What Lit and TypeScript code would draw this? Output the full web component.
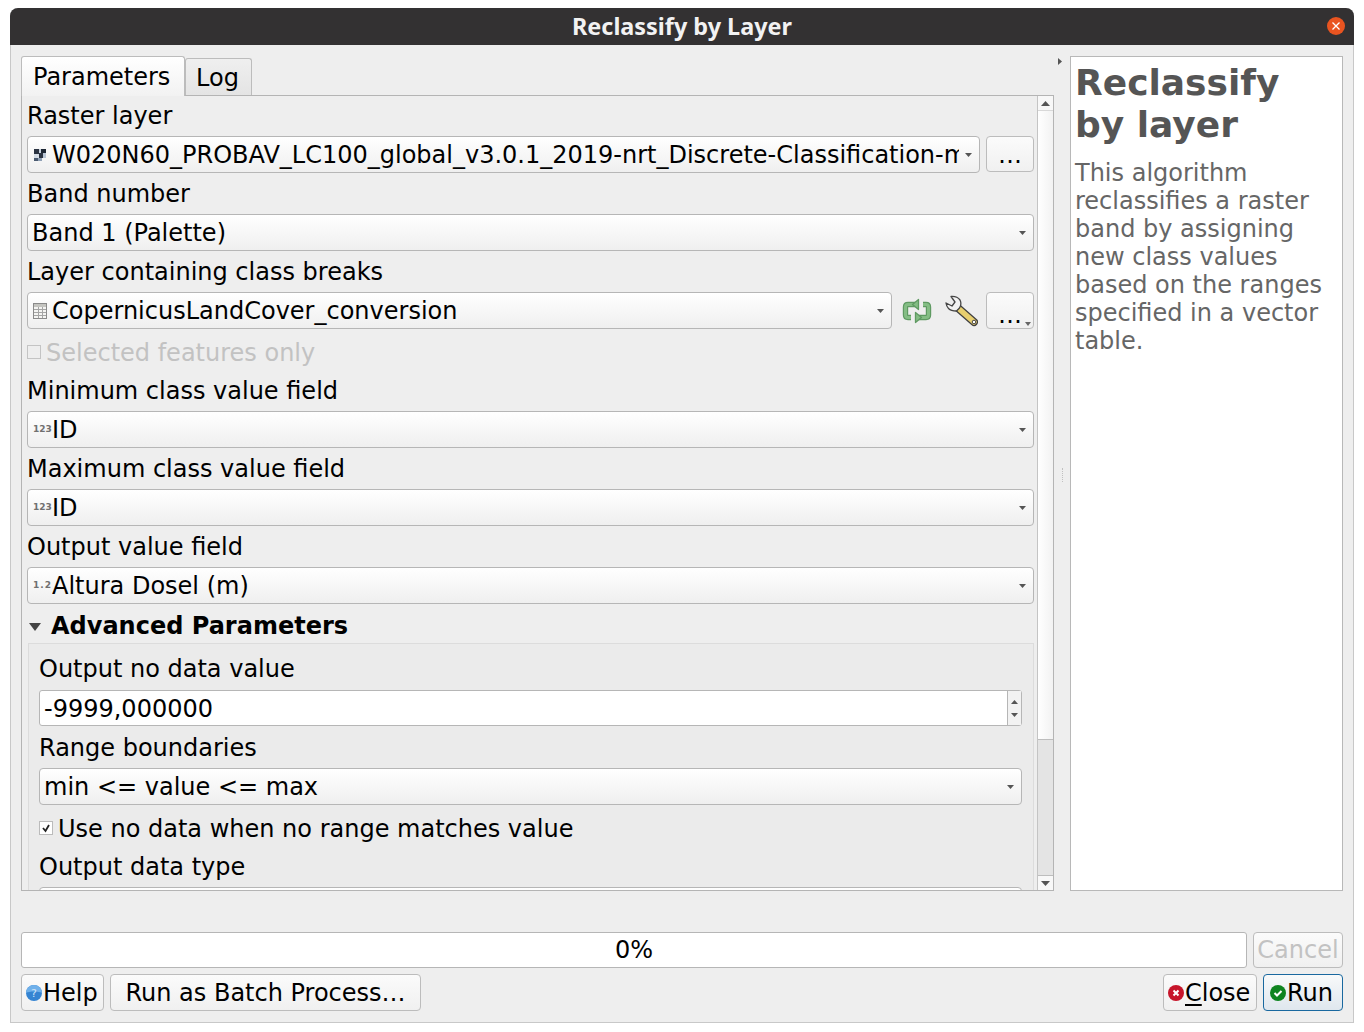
import { LitElement, html, css, svg } from 'lit';
import { customElement } from 'lit/decorators.js';

const arrow = html`<svg class="arrow" width="7" height="4" viewBox="0 0 7 4"><path d="M0 0h7L3.500 4z" fill="#555" /></svg>`;

const rasterIcon = html`<svg class="icon" width="16" height="16" viewBox="0 0 16 16" shape-rendering="crispEdges">
  <rect x="2" y="2" width="5" height="5" fill="#2b3442" />
  <rect x="7" y="2" width="2" height="5" fill="#c9d3df" />
  <rect x="9" y="2" width="5" height="4" fill="#1d2633" />
  <rect x="2" y="7" width="5" height="4" fill="#d5dde6" />
  <rect x="7" y="6" width="4" height="5" fill="#2b3442" />
  <rect x="11" y="6" width="3" height="5" fill="#b9c6d6" />
  <rect x="2" y="11" width="4" height="3" fill="#4a5a70" />
  <rect x="6" y="11" width="4" height="3" fill="#8fa0b5" />
</svg>`;

const tableIcon = html`<svg class="icon" width="16" height="16" viewBox="0 0 16 16" shape-rendering="crispEdges">
  <rect x="1.5" y="0.5" width="13" height="15" fill="#f4f4f2" stroke="#8a8a8a" />
  <rect x="2" y="1" width="12" height="3" fill="#c4c4c0" />
  <path d="M2 6.5h12M2 9.5h12M2 12.5h12M6.5 4v11M10.5 4v11" stroke="#a5a5a5" fill="none" />
</svg>`;

const refreshIcon = html`<svg width="30" height="26" viewBox="0 0 30 26">
  <g fill="none" stroke="#5f9a62" stroke-width="5.400" stroke-linejoin="round">
    <path d="M13 6.500H6Q3.500 6.500 3.500 9V17Q3.500 19.500 6 19.500H9" />
    <path d="M17 19.500H24Q26.500 19.500 26.500 17V9Q26.500 6.500 24 6.500H21" />
  </g>
  <g fill="none" stroke="#84bd84" stroke-width="3" stroke-linejoin="round">
    <path d="M13 6.500H6Q3.500 6.500 3.500 9V17Q3.500 19.500 6 19.500H9" />
    <path d="M17 19.500H24Q26.500 19.500 26.500 17V9Q26.500 6.500 24 6.500H21" />
  </g>
  <path d="M16.500 1.500V11.500L10.500 6.500z" fill="#84bd84" stroke="#5f9a62" stroke-width="1.300" stroke-linejoin="round" />
  <path d="M13.500 14.500V24.500L19.500 19.500z" fill="#84bd84" stroke="#5f9a62" stroke-width="1.300" stroke-linejoin="round" />
</svg>`;

const wrenchIcon = html`<svg width="34" height="32" viewBox="0 0 34 32">
  <path d="M14 13L30 27" stroke="#3f3f3f" stroke-width="8" stroke-linecap="round" fill="none" />
  <path d="M14 13L30 27" stroke="#e8cf6f" stroke-width="5.500" stroke-linecap="round" fill="none" />
  <path d="M2 8L8 11L11 7L7 1.500Q13 1 16 5Q18 9 15.500 13L12.500 16Q7 16 4.500 13.500Q2.500 11.500 2 8z" fill="#f2f2f2" stroke="#454545" stroke-width="1.300" stroke-linejoin="round" />
  <circle cx="30" cy="27" r="1.800" fill="#fff" stroke="#444" />
</svg>`;

const helpIcon = html`<svg class="btn-icon" width="16" height="16" viewBox="0 0 16 16">
  <circle cx="8" cy="8" r="8" fill="#3584d2" />
  <path d="M0 8a8 8 0 0 1 16 0c-3-2-13-2-16 0z" fill="#6fb0ea" />
  <text x="8" y="12" text-anchor="middle" font-size="11" fill="#cfe3f7" font-family="DejaVu Sans">?</text>
</svg>`;

const closeIcon = html`<svg class="btn-icon" width="16" height="16" viewBox="0 0 16 16">
  <circle cx="8" cy="8" r="8" fill="#c7162b" />
  <path d="M5.500 5.500l5 5M10.500 5.500l-5 5" stroke="#fff" stroke-width="2" />
</svg>`;

const runIcon = html`<svg class="btn-icon" width="16" height="16" viewBox="0 0 16 16">
  <circle cx="8" cy="8" r="8" fill="#0e8420" />
  <path d="M4.500 8l2.500 2.500 4.500-4.500" stroke="#fff" stroke-width="2" fill="none" />
</svg>`;

const titleClose = svg`<path d="M5.500 5.500l7 7M12.500 5.500l-7 7" stroke="#fff" stroke-width="1.300" />`;

@customElement('app-root')
export class AppRoot extends LitElement {
  static styles = css`
    :host {
      display: block;
      font-family: 'DejaVu Sans', sans-serif;
      font-size: 24px;
      color: #000;
    }
    .page {
      height: 1032px;
      box-sizing: border-box;
      padding: 8px 10px 9px;
      background: #fff;
    }
    .window {
      height: 100%;
      display: flex;
      flex-direction: column;
      background: #eeeeee;
      border: 1px solid #c8c8c8;
      border-top: 0;
      border-radius: 8px 8px 0 0;
      box-sizing: border-box;
    }
    .titlebar {
      height: 37px;
      box-sizing: border-box;
      padding-bottom: 2px;
      margin: 0 -1px;
      flex: none;
      display: flex;
      align-items: center;
      justify-content: center;
      position: relative;
      background: #333132;
      color: #f2f2f2;
      border-radius: 8px 8px 0 0;
      font-family: 'Noto Sans', sans-serif;
      font-size: 23.400px;
      font-weight: 700;
    }
    .title-close {
      position: absolute;
      right: 9px;
      top: 9px;
    }
    .main {
      flex: none;
      height: 835px;
      margin-top: 11px;
      padding: 0 10px;
      display: flex;
    }
    .left {
      width: 1033px;
      flex: none;
      display: flex;
      flex-direction: column;
    }
    .tabs {
      display: flex;
      align-items: flex-end;
      height: 39px;
      flex: none;
    }
    .tab {
      box-sizing: border-box;
      border: 1px solid #bcbcbc;
      border-bottom: 0;
      border-radius: 3px 3px 0 0;
      line-height: 28px;
    }
    .tab.on {
      width: 164px;
      height: 40px;
      margin-bottom: -1px;
      padding: 6px 0 0 11px;
      background: linear-gradient(#fff, #f2f2f2);
      position: relative;
      z-index: 1;
    }
    .tab.off {
      width: 67px;
      height: 37px;
      padding: 5px 0 0 10px;
      background: linear-gradient(#efefef, #e4e4e4);
    }
    .pane {
      flex: 1;
      min-height: 0;
      display: flex;
      border: 1px solid #b4b4b4;
      background: #eeeeee;
    }
    .scroll {
      flex: 1;
      min-width: 0;
      overflow: hidden;
      padding: 5px 3px 0 5px;
      display: flex;
      flex-direction: column;
      gap: 6px;
    }
    .lab {
      line-height: 31px;
      height: 29px;
      white-space: nowrap;
      flex: none;
    }
    .row {
      display: flex;
      gap: 6px;
      flex: none;
      align-items: flex-start;
    }
    .combo {
      flex: 1;
      min-width: 0;
      height: 37px;
      flex-shrink: 0;
      box-sizing: border-box;
      display: flex;
      align-items: center;
      padding: 0 7px 0 4px;
      border: 1px solid #b6b6b6;
      border-radius: 4px;
      background: linear-gradient(#ffffff, #efefef);
      white-space: nowrap;
    }
    .combo .text {
      flex: 1;
      min-width: 0;
      overflow: hidden;
    }
    .icon {
      flex: none;
      margin: 0 4px 0 0;
    }
    .small-ic {
      flex: none;
      width: 16px;
      margin: -2px 3px 0 1px;
      font-size: 9px;
      font-weight: 700;
      color: #707070;
      text-align: center;
      white-space: nowrap;
    }
    .small-ic.spaced {
      letter-spacing: 1px;
    }
    .arrow {
      flex: none;
      margin-left: 6px;
    }
    .tool {
      flex: none;
      width: 48px;
      height: 36px;
      box-sizing: border-box;
      border: 1px solid #bcbcbc;
      border-radius: 4px;
      background: linear-gradient(#fbfbfb, #f0f0f0);
      text-align: center;
      line-height: 36px;
      position: relative;
    }
    .tool.tall {
      height: 37px;
      line-height: 44px;
    }
    .tool .corner {
      position: absolute;
      right: 2px;
      bottom: 2px;
    }
    .icon-btn {
      flex: none;
      width: 38px;
      height: 37px;
      display: flex;
      align-items: center;
      justify-content: center;
    }
    .icon-btn.gap {
      margin-left: 6px;
    }
    .icon-btn.wide {
      width: 50px;
    }
    .row.tight {
      gap: 0;
    }
    .checkline {
      height: 35px;
      flex: none;
      display: flex;
      align-items: center;
      gap: 5px;
      white-space: nowrap;
    }
    .checkline.off {
      color: #c2c2c2;
    }
    .box {
      width: 14px;
      height: 14px;
      margin-top: -1px;
      box-sizing: border-box;
      border: 1px solid #c4c4c4;
      flex: none;
    }
    .box.checked {
      background: #fff;
      border-color: #bbb;
      display: flex;
      align-items: center;
      justify-content: center;
    }
    .adv {
      display: flex;
      align-items: center;
      gap: 10px;
      font-weight: 700;
      padding-left: 2px;
      margin-top: 2px;
      margin-bottom: -4px;
    }
    .group {
      flex: none;
      margin-left: 1px;
      border: 1px solid #dcdcdc;
      border-bottom: 0;
      background: #ebebeb;
      padding: 10px 11px 0 10px;
      display: flex;
      flex-direction: column;
      gap: 6px;
    }
    .spin {
      height: 36px;
      margin: 1px 0;
      box-sizing: border-box;
      flex: none;
      display: flex;
      border: 1px solid #b6b6b6;
      border-radius: 3px;
      background: #fff;
    }
    .spin .val {
      flex: 1;
      padding-left: 4px;
      line-height: 36px;
    }
    .spin .btns {
      width: 14px;
      border-left: 1px solid #b6b6b6;
      background: #f2f2f2;
      display: flex;
      flex-direction: column;
      align-items: center;
      justify-content: space-around;
      padding: 4px 0;
      box-sizing: border-box;
    }
    .vbar {
      flex: none;
      width: 15px;
      border-left: 1px solid #c4c4c4;
      display: flex;
      flex-direction: column;
      background: #fff;
    }
    .vbar .end {
      height: 14px;
      flex: none;
      display: flex;
      align-items: center;
      justify-content: center;
      background: #f8f8f8;
    }
    .vbar .thumb {
      height: 629px;
      flex: none;
      background: linear-gradient(90deg, #fff, #f2f2f2);
      border-top: 1px solid #d8d8d8;
      box-sizing: border-box;
    }
    .vbar .track {
      flex: 1;
      background: #e4e4e4;
      border-top: 1px solid #bdbdbd;
      border-bottom: 1px solid #bdbdbd;
    }
    .split {
      flex: none;
      width: 16px;
      display: flex;
      flex-direction: column;
      align-items: center;
    }
    .split .tri {
      margin-top: 2px;
      align-self: flex-start;
      margin-left: 4px;
    }
    .split .dots {
      margin-top: 403px;
      height: 14px;
      border-left: 1px dotted #c0c0c0;
    }
    .help {
      flex: 1;
      min-width: 0;
      box-sizing: border-box;
      background: #fff;
      border: 1px solid #b8b8b8;
      padding: 5px 4px 0 4px;
      color: #666;
      line-height: 28px;
    }
    .help h1 {
      margin: 0 0 13px;
      font-size: 36px;
      line-height: 42px;
      font-weight: 700;
      color: #555;
    }
    .help p {
      margin: 0;
    }
    .progress-row {
      flex: none;
      margin-top: 41px;
      padding: 0 10px;
      display: flex;
      gap: 6px;
    }
    .progress {
      flex: 1;
      height: 36px;
      box-sizing: border-box;
      border: 1px solid #b6b6b6;
      border-radius: 3px;
      background: #fff;
      text-align: center;
      line-height: 34px;
    }
    .btn {
      flex: none;
      height: 37px;
      box-sizing: border-box;
      border: 1px solid #bcbcbc;
      border-radius: 4px;
      background: linear-gradient(#fbfbfb, #f0f0f0);
      display: flex;
      align-items: center;
      justify-content: center;
      white-space: nowrap;
    }
    .btn.cancel {
      width: 90px;
      height: 36px;
      color: #c2c2c2;
    }
    .btn.help-btn {
      width: 83px;
      justify-content: flex-start;
      padding-left: 4px;
    }
    .btn.batch {
      width: 311px;
    }
    .btn.close {
      width: 94px;
      justify-content: flex-start;
      padding-left: 4px;
    }
    .btn.run {
      width: 80px;
      justify-content: flex-start;
      padding-left: 6px;
      border-color: #19689f;
      background: linear-gradient(#f8f9fa, #dfe7ee);
    }
    .btn-icon {
      flex: none;
      margin-right: 1px;
    }
    .btn u {
      text-underline-offset: 3px;
    }
    .buttons {
      flex: none;
      margin-top: 6px;
      padding: 0 10px;
      display: flex;
      gap: 6px;
    }
    .spacer {
      flex: 1;
    }
  `;

  combo(text: string, icon: unknown = null) {
    return html`<div class="combo">${icon}<span class="text">${text}</span>${arrow}</div>`;
  }

  num(label: string, spaced = false) {
    return html`<span class="small-ic ${spaced ? 'spaced' : ''}">${label}</span>`;
  }

  render() {
    return html`
      <div class="page">
        <div class="window">
          <div class="titlebar">
            Reclassify by Layer
            <svg class="title-close" width="18" height="18" viewBox="0 0 18 18">
              <circle cx="9" cy="9" r="9" fill="#e95420" />
              ${titleClose}
            </svg>
          </div>

          <div class="main">
            <div class="left">
              <div class="tabs">
                <div class="tab on">Parameters</div>
                <div class="tab off">Log</div>
              </div>
              <div class="pane">
                <div class="scroll">
                  <div class="lab">Raster layer</div>
                  <div class="row">
                    ${this.combo('W020N60_PROBAV_LC100_global_v3.0.1_2019-nrt_Discrete-Classification-map', rasterIcon)}
                    <div class="tool">…</div>
                  </div>
                  <div class="lab">Band number</div>
                  <div class="row">${this.combo('Band 1 (Palette)')}</div>
                  <div class="lab">Layer containing class breaks</div>
                  <div class="row tight">
                    ${this.combo('CopernicusLandCover_conversion', tableIcon)}
                    <div class="icon-btn gap">${refreshIcon}</div>
                    <div class="icon-btn wide">${wrenchIcon}</div>
                    <div class="tool tall">
                      …
                      <svg class="corner" width="6" height="4" viewBox="0 0 6 4"><path d="M0 0h6L3 4z" fill="#666" /></svg>
                    </div>
                  </div>
                  <div class="checkline off"><span class="box"></span>Selected features only</div>
                  <div class="lab">Minimum class value field</div>
                  <div class="row">${this.combo('ID', this.num('123'))}</div>
                  <div class="lab">Maximum class value field</div>
                  <div class="row">${this.combo('ID', this.num('123'))}</div>
                  <div class="lab">Output value field</div>
                  <div class="row">${this.combo('Altura Dosel (m)', this.num('1.2', true))}</div>
                  <div class="lab adv">
                    <svg width="12" height="8" viewBox="0 0 12 8"><path d="M0 0h12L6 8z" fill="#444" /></svg>
                    Advanced Parameters
                  </div>
                  <div class="group">
                    <div class="lab">Output no data value</div>
                    <div class="spin">
                      <span class="val">-9999,000000</span>
                      <span class="btns">
                        <svg width="7" height="4" viewBox="0 0 7 4"><path d="M0 4h7L3.500 0z" fill="#555" /></svg>
                        <svg width="7" height="4" viewBox="0 0 7 4"><path d="M0 0h7L3.500 4z" fill="#555" /></svg>
                      </span>
                    </div>
                    <div class="lab">Range boundaries</div>
                    <div class="row">${this.combo('min <= value <= max')}</div>
                    <div class="checkline">
                      <span class="box checked">
                        <svg width="10" height="10" viewBox="0 0 10 10"><path d="M2 5l2.500 3L8 2" stroke="#222" stroke-width="1.800" fill="none" /></svg>
                      </span>
                      Use no data when no range matches value
                    </div>
                    <div class="lab">Output data type</div>
                    <div class="row">${this.combo('')}</div>
                  </div>
                </div>
                <div class="vbar">
                  <div class="end"><svg width="9" height="5" viewBox="0 0 9 5"><path d="M0 5h9L4.500 0z" fill="#555" /></svg></div>
                  <div class="thumb"></div>
                  <div class="track"></div>
                  <div class="end"><svg width="9" height="5" viewBox="0 0 9 5"><path d="M0 0h9L4.500 5z" fill="#555" /></svg></div>
                </div>
              </div>
            </div>

            <div class="split">
              <svg class="tri" width="4" height="7" viewBox="0 0 4 7"><path d="M0 0l4 3.500L0 7z" fill="#555" /></svg>
              <div class="dots"></div>
            </div>

            <div class="help">
              <h1>Reclassify by layer</h1>
              <p>This algorithm reclassifies a raster band by assigning new class values based on the ranges specified in a vector table.</p>
            </div>
          </div>

          <div class="progress-row">
            <div class="progress">0%</div>
            <div class="btn cancel">Cancel</div>
          </div>
          <div class="buttons">
            <div class="btn help-btn">${helpIcon}Help</div>
            <div class="btn batch">Run as Batch Process…</div>
            <div class="spacer"></div>
            <div class="btn close">${closeIcon}<span><u>C</u>lose</span></div>
            <div class="btn run">${runIcon}Run</div>
          </div>
        </div>
      </div>
    `;
  }
}
